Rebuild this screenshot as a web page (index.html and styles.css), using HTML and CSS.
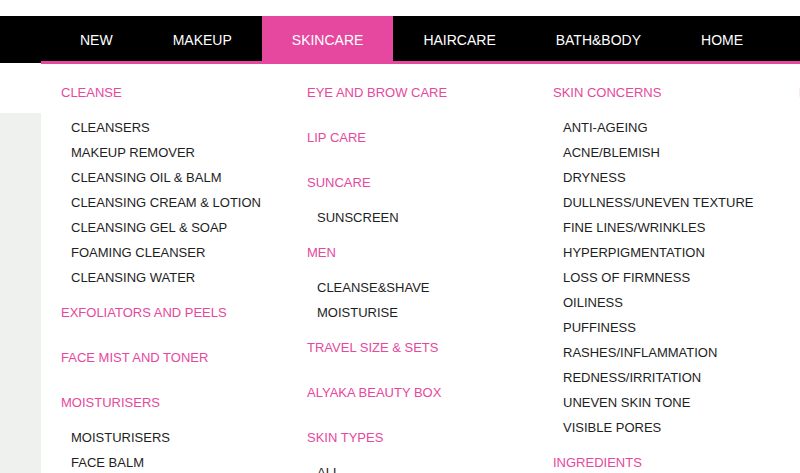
FILE: index.html
```html
<!DOCTYPE html>
<html>
<head>
<meta charset="utf-8">
<link rel="stylesheet" href="styles.css">
</head>
<body>
<header class="topbar">
  <nav class="nav">
    <a class="nav-item">NEW</a>
    <a class="nav-item">MAKEUP</a>
    <a class="nav-item active">SKINCARE</a>
    <a class="nav-item">HAIRCARE</a>
    <a class="nav-item">BATH&amp;BODY</a>
    <a class="nav-item">HOME</a>
  </nav>
</header>
<main class="page">
  <div class="page-gap"></div>
  <div class="page-side"></div>
</main>
<div class="mega">
  <div class="col">
    <div class="group">
      <div class="heading">CLEANSE</div>
      <ul class="list">
        <li>CLEANSERS</li>
        <li>MAKEUP REMOVER</li>
        <li>CLEANSING OIL &amp; BALM</li>
        <li>CLEANSING CREAM &amp; LOTION</li>
        <li>CLEANSING GEL &amp; SOAP</li>
        <li>FOAMING CLEANSER</li>
        <li>CLEANSING WATER</li>
      </ul>
    </div>
    <div class="group"><div class="heading">EXFOLIATORS AND PEELS</div></div>
    <div class="group"><div class="heading">FACE MIST AND TONER</div></div>
    <div class="group">
      <div class="heading">MOISTURISERS</div>
      <ul class="list">
        <li>MOISTURISERS</li>
        <li>FACE BALM</li>
      </ul>
    </div>
  </div>
  <div class="col">
    <div class="group"><div class="heading">EYE AND BROW CARE</div></div>
    <div class="group"><div class="heading">LIP CARE</div></div>
    <div class="group">
      <div class="heading">SUNCARE</div>
      <ul class="list"><li>SUNSCREEN</li></ul>
    </div>
    <div class="group">
      <div class="heading">MEN</div>
      <ul class="list">
        <li>CLEANSE&amp;SHAVE</li>
        <li>MOISTURISE</li>
      </ul>
    </div>
    <div class="group"><div class="heading">TRAVEL SIZE &amp; SETS</div></div>
    <div class="group"><div class="heading">ALYAKA BEAUTY BOX</div></div>
    <div class="group">
      <div class="heading">SKIN TYPES</div>
      <ul class="list">
        <li>ALL</li>
      </ul>
    </div>
  </div>
  <div class="col">
    <div class="group">
      <div class="heading">SKIN CONCERNS</div>
      <ul class="list">
        <li>ANTI-AGEING</li>
        <li>ACNE/BLEMISH</li>
        <li>DRYNESS</li>
        <li>DULLNESS/UNEVEN TEXTURE</li>
        <li>FINE LINES/WRINKLES</li>
        <li>HYPERPIGMENTATION</li>
        <li>LOSS OF FIRMNESS</li>
        <li>OILINESS</li>
        <li>PUFFINESS</li>
        <li>RASHES/INFLAMMATION</li>
        <li>REDNESS/IRRITATION</li>
        <li>UNEVEN SKIN TONE</li>
        <li>VISIBLE PORES</li>
      </ul>
    </div>
    <div class="group"><div class="heading">INGREDIENTS</div></div>
  </div>
  <div class="col">
    <div class="group"><div class="heading">BRANDS</div></div>
  </div>
</div>
</body>
</html>
```

FILE: styles.css
```css
html, body {
  margin: 0;
  padding: 0;
  height: 473px;
  overflow: hidden;
  background: #ffffff;
  font-family: "Liberation Sans", Arial, sans-serif;
}

.topbar {
  margin-top: 16px;
  height: 47px;
  background: #000000;
}

.nav {
  display: flex;
  padding-left: 50px;
  height: 45px;
}

.nav-item {
  display: block;
  padding: 3px 30px 0;
  line-height: 42px;
  font-size: 14px;
  color: #ffffff;
  text-decoration: none;
  white-space: nowrap;
}

.nav-item.active {
  background: #e5489e;
}

.page {
  position: relative;
}

.page-gap {
  height: 50px;
}

.page-side {
  width: 41px;
  height: 400px;
  background: #eff1ef;
}

.mega {
  position: absolute;
  top: 61px;
  left: 41px;
  right: 0;
  bottom: 0;
  background: #ffffff;
  border-top: 3px solid #e5489e;
  padding: 16px 0 0 20px;
  display: grid;
  grid-template-columns: repeat(4, 246px);
  align-items: start;
  overflow: hidden;
}

.col {
  min-width: 0;
}

.group {
  margin-bottom: 10px;
}

.heading {
  font-size: 13px;
  line-height: 25px;
  padding-bottom: 10px;
  color: #e5489e;
  white-space: nowrap;
}

.list {
  list-style: none;
  margin: 0;
  padding: 0 0 0 10px;
}

.list li {
  font-size: 13px;
  line-height: 25px;
  color: #1e1e1e;
  white-space: nowrap;
}
```
